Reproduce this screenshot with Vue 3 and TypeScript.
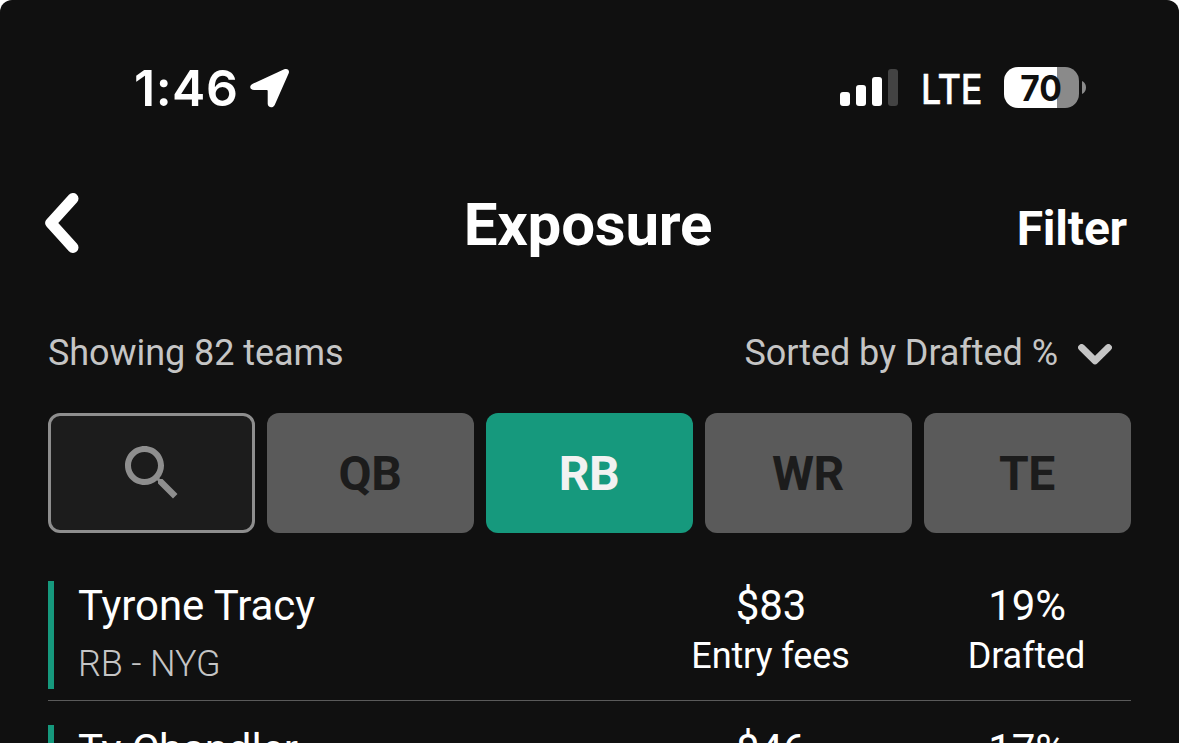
<script setup lang="ts">
interface Player {
  name: string
  detail?: string
  fees: string
  drafted: string
}

const tabs: string[] = ['QB', 'RB', 'WR', 'TE']
const activeTab = 'RB'

const players: Player[] = [
  { name: 'Tyrone Tracy', detail: 'RB - NYG', fees: '$83', drafted: '19%' },
  { name: 'Ty Chandler', fees: '$46', drafted: '17%' },
]
</script>

<template>
  <main class="screen">
    <div class="status">
      <div class="clock">
        <span class="time">1:46</span>
        <svg class="location" width="40" height="40" viewBox="0 0 40 40">
          <path d="M2.800 15.800 34.200 1.300C37.400-.1 39.900 2.200 38.700 5.200L24.700 37C22.900 40.700 17.700 39.800 17.700 35.800V22.900Q17.700 22.100 16.900 22.100H4.200C-.3 22.100-1.300 17.700 2.800 15.800Z" fill="#fff" />
        </svg>
      </div>
      <div class="signals">
        <svg class="bars" width="58" height="37" viewBox="0 0 58 37">
          <rect x="0" y="23" width="10" height="14" rx="3" fill="#fff" />
          <rect x="16" y="16" width="10" height="21" rx="3" fill="#fff" />
          <rect x="32" y="8" width="10" height="29" rx="3" fill="#fff" />
          <rect x="48" y="0" width="10" height="37" rx="3" fill="#434343" />
        </svg>
        <span class="network">LTE</span>
        <div class="battery"><span class="level">70</span></div>
        <svg class="nub" width="4" height="13" viewBox="0 0 4 13">
          <path d="M0 0C2.400 1 4 3.500 4 6.500S2.400 12 0 13Z" fill="#8a8a8a" />
        </svg>
      </div>
    </div>

    <header class="header">
      <svg class="back" width="34" height="60" viewBox="0 0 34 60">
        <path d="M28 5.500 5.800 30 28 54.500" fill="none" stroke="#fff" stroke-width="11" stroke-linecap="round" stroke-linejoin="round" />
      </svg>
      <h1 class="title">Exposure</h1>
      <span class="filter">Filter</span>
    </header>

    <div class="summary">
      <span class="showing">Showing 82 teams</span>
      <span class="sort">
        <span class="sorted">Sorted by Drafted %</span>
        <svg class="chevron" width="34" height="21" viewBox="0 0 34 21">
          <path d="M3.600 3.600 17 16.800 30.400 3.600" fill="none" stroke="#c5c5c5" stroke-width="7" stroke-linecap="round" stroke-linejoin="round" />
        </svg>
      </span>
    </div>

    <nav class="tabs">
      <div class="tab search">
        <svg width="72" height="72" viewBox="0 0 24 24">
          <path fill="#8e8e8e" d="M15.500 14h-.79l-.28-.27C15.410 12.590 16 11.110 16 9.500 16 5.910 13.090 3 9.500 3S3 5.910 3 9.500 5.910 16 9.500 16c1.610 0 3.090-.59 4.230-1.570l.27.28v.79l5 4.990L20.490 19l-4.990-5zm-6 0C7.010 14 5 11.990 5 9.500S7.010 5 9.500 5 14 7.010 14 9.500 11.990 14 9.500 14z" />
        </svg>
      </div>
      <div v-for="tab in tabs" :key="tab" class="tab" :class="{ active: tab === activeTab }">
        <span class="tab-text">{{ tab }}</span>
      </div>
    </nav>

    <section class="list">
      <article v-for="player in players" :key="player.name" class="row">
        <div class="player">
          <div class="name">{{ player.name }}</div>
          <div v-if="player.detail" class="detail">{{ player.detail }}</div>
        </div>
        <div class="stat">
          <div class="value">{{ player.fees }}</div>
          <div v-if="player.detail" class="label">Entry fees</div>
        </div>
        <div class="stat">
          <div class="value">{{ player.drafted }}</div>
          <div v-if="player.detail" class="label">Drafted</div>
        </div>
      </article>
    </section>
  </main>
</template>

<style>
html,
body {
  margin: 0;
  background: #fff;
  overflow: hidden;
}
</style>

<style scoped>
.screen {
  box-sizing: border-box;
  width: 1179px;
  height: 743px;
  overflow: hidden;
  border-radius: 12px 12px 0 0;
  background: #101010;
  color: #fff;
  font-family: Roboto, "Liberation Sans", sans-serif;
}
.status {
  box-sizing: border-box;
  height: 176px;
  padding: 0 93px 0 134px;
  display: flex;
  align-items: center;
  justify-content: space-between;
  font-family: Inter, "Liberation Sans", sans-serif;
}
.clock,
.signals {
  display: flex;
  align-items: center;
}
.time {
  width: 116px;
  font-size: 50px;
  line-height: 60px;
  font-weight: 600;
  letter-spacing: 0.5px;
}
.network {
  width: 83px;
  margin-left: 23px;
  font-size: 41px;
  line-height: 50px;
  font-weight: 500;
  letter-spacing: -0.5px;
  -webkit-text-stroke: 0.4px #fff;
  transform: translateY(2px) scaleX(0.88);
  transform-origin: 0 50%;
}
.signals {
  height: 41px;
  margin-bottom: 2px;
}
.battery {
  width: 75px;
  height: 41px;
  border-radius: 14px;
  background: linear-gradient(90deg, #fff 53px, #8a8a8a 53px);
  color: #101010;
  text-align: center;
}
.level {
  display: block;
  font-size: 35px;
  line-height: 41px;
  font-weight: 700;
  transform: translate(-0.5px, 0.5px) scaleX(0.96);
}
.nub {
  margin-left: 3px;
}
.header {
  height: 96px;
  padding: 0 52px 0 45px;
  display: grid;
  grid-template-columns: 1fr auto 1fr;
  align-items: center;
}
.back {
  display: block;
  margin-bottom: 2px;
}
.title {
  margin: 0;
  padding: 2px 0 0 4px;
  font-size: 60px;
  line-height: 70px;
  font-weight: 700;
  letter-spacing: -0.2px;
}
.filter {
  justify-self: end;
  padding-top: 10px;
  font-size: 48px;
  line-height: 56px;
  font-weight: 700;
  letter-spacing: -0.2px;
}
.summary {
  height: 42px;
  margin-top: 60px;
  padding: 0 67px 0 48px;
  display: flex;
  align-items: center;
  justify-content: space-between;
  color: #c5c5c5;
  font-size: 36px;
  line-height: 42px;
  letter-spacing: -0.06px;
}
.sort {
  display: flex;
  align-items: center;
  gap: 20px;
}
.chevron {
  margin-top: 2px;
}
.tabs {
  margin: 39px 48px 0;
  display: grid;
  grid-template-columns: repeat(5, 207px);
  gap: 12px;
}
.tab {
  box-sizing: border-box;
  height: 120px;
  border-radius: 12px;
  display: flex;
  align-items: center;
  justify-content: center;
  background: #5a5a5a;
  color: #1c1c1c;
  font-size: 48px;
  line-height: 56px;
  font-weight: 700;
  letter-spacing: -0.4px;
}
.tab-text {
  padding: 2px 1px 0 0;
}
.tab.active {
  background: #16997d;
  color: #f2f2f2;
}
.tab.search {
  background: #1c1c1c;
  border: 3px solid #8e8e8e;
}
.list {
  margin: 48px 48px 0;
}
.row {
  display: flex;
  gap: 48px;
  height: 119px;
  border-bottom: 1px solid #5a5a5a;
  margin-bottom: 24px;
}
.player {
  box-sizing: border-box;
  flex: 1;
  height: 108px;
  border-left: 6px solid #16997d;
  padding-left: 24px;
}
.name,
.value {
  font-size: 42px;
  line-height: 49px;
  letter-spacing: -0.08px;
}
.detail {
  margin-top: 10px;
  font-size: 36px;
  line-height: 48px;
  font-weight: 300;
  letter-spacing: -0.15px;
  color: #c5c5c5;
}
.stat {
  width: 208px;
  text-align: center;
}
.label {
  margin-right: 1px;
  font-size: 36px;
  line-height: 52px;
  letter-spacing: -0.12px;
}
</style>
